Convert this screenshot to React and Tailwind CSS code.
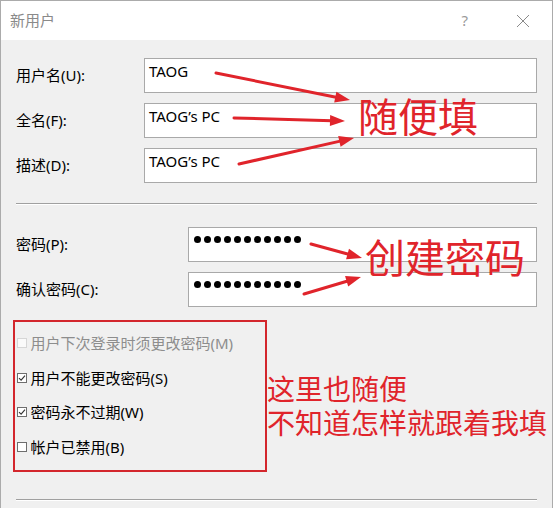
import React from 'react';

const FONT = { fontFamily: '"Noto Sans", "Noto Sans CJK SC", sans-serif' };
const RED = '#e0242b';

// annotation arrows: [startX, startY, tipX, tipY]
const ARROWS = [
  [215, 72, 349, 99],
  [233, 117, 344, 120],
  [238, 163, 353, 137],
  [310, 243, 361, 257],
  [303, 293, 360, 276],
];

const Arrow = ({ s }) => {
  const [x1, y1, x2, y2] = s;
  const len = Math.hypot(x2 - x1, y2 - y1);
  const ux = (x2 - x1) / len;
  const uy = (y2 - y1) / len;
  const bx = x2 - ux * 15;
  const by = y2 - uy * 15;
  const nx = -uy * 5.5;
  const ny = ux * 5.5;
  return (
    <g>
      <line x1={x1} y1={y1} x2={bx + ux * 2} y2={by + uy * 2} stroke={RED} strokeWidth="3" strokeLinecap="round" />
      <polygon points={`${x2},${y2} ${bx + nx},${by + ny} ${bx - nx},${by - ny}`} fill={RED} />
    </g>
  );
};

const Field = ({ children }) => (
  <div className="h-[35px] flex-1 bg-white border border-[#a9a9a9] pl-[4px] pt-[1px] text-[15px] text-black leading-[22px]">
    {children}
  </div>
);

const Dots = () => (
  <div className="flex gap-[3px] pt-[7px] pl-[1px]">
    {Array.from({ length: 11 }).map((_, i) => (
      <span key={i} className="w-[7px] h-[7px] rounded-full bg-black" />
    ))}
  </div>
);

const Separator = () => (
  <div className="flex flex-col">
    <div className="h-px bg-[#a0a0a0]" />
    <div className="h-px bg-white" />
  </div>
);

const Check = ({ checked, disabled, label }) => (
  <div className="h-[34.5px] flex items-center gap-[4px]">
    <span
      className={
        disabled
          ? 'w-[10px] h-[10px] border border-[#d6d6d6] bg-[#fafafa]'
          : 'w-[10px] h-[10px] border border-[#6e6e6e] bg-white flex items-center justify-center'
      }
    >
      {checked && (
        <svg width="8" height="8" viewBox="0 0 8 8">
          <path d="M1 4.2 L3.1 6.2 L7 1.6" fill="none" stroke="#333" strokeWidth="1.1" />
        </svg>
      )}
    </span>
    <span className={disabled ? 'text-[15px] text-[#8d8d8d]' : 'text-[15px] text-black'}>{label}</span>
  </div>
);

export default function App() {
  return (
    <div className="relative w-[553px] h-[508px] overflow-hidden bg-[#f0f0f0] border-x border-t border-[#ababab]" style={FONT}>
      {/* Title bar */}
      <div className="h-[39px] bg-white flex items-center pl-[9px] pr-[22px]">
        <span className="text-[15px] text-[#8a8a8a]">新用户</span>
        <span className="ml-auto text-[15px] text-[#9a9a9a] mr-[48px]">?</span>
        <svg width="14" height="14" viewBox="0 0 14 14">
          <path d="M1 1 L13 13 M13 1 L1 13" stroke="#8a8a8a" strokeWidth="1" />
        </svg>
      </div>

      {/* Body */}
      <div className="px-[15px] pt-[18px] text-[15px] text-black">
        <div className="flex flex-col gap-[10px]">
          <div className="flex items-center">
            <span className="w-[128px]">用户名(U):</span>
            <Field>TAOG</Field>
          </div>
          <div className="flex items-center">
            <span className="w-[128px]">全名(F):</span>
            <Field>TAOG’s PC</Field>
          </div>
          <div className="flex items-center">
            <span className="w-[128px]">描述(D):</span>
            <Field>TAOG’s PC</Field>
          </div>
        </div>

        <div className="mt-[20px] mb-[22px]">
          <Separator />
        </div>

        <div className="flex flex-col gap-[10px]">
          <div className="flex items-center">
            <span className="w-[172px]">密码(P):</span>
            <Field><Dots /></Field>
          </div>
          <div className="flex items-center">
            <span className="w-[172px]">确认密码(C):</span>
            <Field><Dots /></Field>
          </div>
        </div>

        <div className="mt-[13px] -ml-[3px] w-[254px] h-[152px] border-2 border-[#d3262c] pl-[1.5px] pt-[4px]">
          <Check disabled label="用户下次登录时须更改密码(M)" />
          <Check checked label="用户不能更改密码(S)" />
          <Check checked label="密码永不过期(W)" />
          <Check label="帐户已禁用(B)" />
        </div>

        <div className="mt-[27px]">
          <Separator />
        </div>
      </div>

      {/* Annotations */}
      <svg className="absolute left-0 top-0 pointer-events-none" width="553" height="508" viewBox="0 0 553 508">
        {ARROWS.map((s, i) => (
          <Arrow key={i} s={s} />
        ))}
      </svg>
      <div className="absolute left-[357px] top-[96px] text-[40px] leading-none text-[#e0242b]">随便填</div>
      <div className="absolute left-[364px] top-[237px] text-[40px] leading-none text-[#e0242b]">创建密码</div>
      <div className="absolute left-[266px] top-[374px] flex flex-col gap-[6px] text-[28px] leading-[28px] text-[#e0242b] whitespace-nowrap">
        <span>这里也随便</span>
        <span>不知道怎样就跟着我填</span>
      </div>
    </div>
  );
}
